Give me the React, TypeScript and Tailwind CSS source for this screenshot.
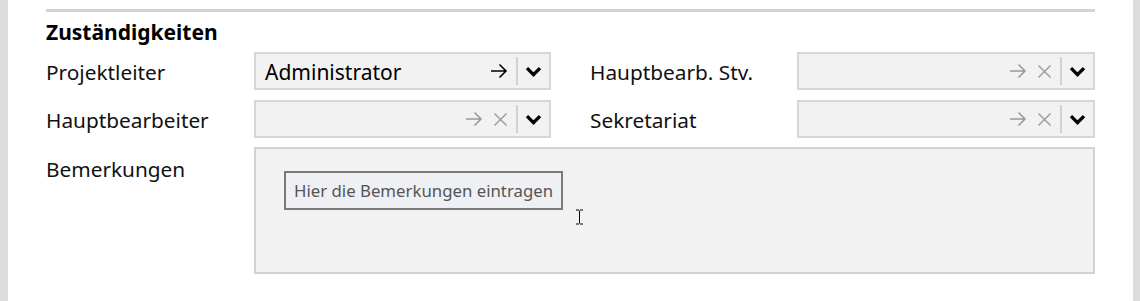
import React from "react";

const font = { fontFamily: '"Noto Sans", "Open Sans", sans-serif' };

function Arrow({ muted }: { muted?: boolean }) {
  return (
    <svg width="18" height="16" viewBox="0 0 18 16" className={muted ? "text-[#9a9a9a]" : "text-black"}>
      <path d="M1 8h15M9.5 1.5 16 8l-6.5 6.5" fill="none" stroke="currentColor" strokeWidth="1.6" />
    </svg>
  );
}

function Cross() {
  return (
    <svg width="15" height="15" viewBox="0 0 15 15" className="text-[#9a9a9a]">
      <path d="M1.5 1.5l12 12M13.5 1.5l-12 12" fill="none" stroke="currentColor" strokeWidth="1.4" />
    </svg>
  );
}

function Chevron() {
  return (
    <svg width="17" height="11" viewBox="0 0 17 11">
      <path d="M2 2.2l6.5 6.5 6.5-6.5" fill="none" stroke="black" strokeWidth="3.3" strokeLinejoin="miter" />
    </svg>
  );
}

function Combo({ value }: { value?: string }) {
  return (
    <div className="flex h-[38px] items-stretch border-2 border-[#d6d6d6] bg-[#f2f2f2]">
      <div className="flex flex-1 items-center pl-[9px] pr-[8px] text-[21px] text-black">
        <span className="flex-1 pt-[2px] leading-none">{value}</span>
        {value ? (
          <Arrow />
        ) : (
          <div className="flex items-center gap-[10px]">
            <Arrow muted />
            <Cross />
          </div>
        )}
      </div>
      <div className="my-[3px] w-[2px] bg-[#d2d2d2]" />
      <div className="flex w-[31px] items-center justify-center">
        <Chevron />
      </div>
    </div>
  );
}

function Label({ children }: { children: React.ReactNode }) {
  return <div className="flex h-[38px] items-center pt-[3px] text-[20.8px] text-[#111]">{children}</div>;
}

export default function App() {
  return (
    <div className="flex h-[301px] w-[1140px] bg-white" style={font}>
      <div className="w-[8px] bg-[#dcdcdc]" />
      <div className="flex flex-1 flex-col px-[38px]">
        <div className="mt-[9px] h-[3px] bg-[#d4d4d4]" />
        <div className="flex h-[40px] items-center pt-[2px] text-[21px] font-bold text-black">Zuständigkeiten</div>
        <div className="grid grid-cols-[208px_297px_39px_207px_298px] gap-y-[10px]">
          <Label>Projektleiter</Label>
          <Combo value="Administrator" />
          <div />
          <Label>Hauptbearb. Stv.</Label>
          <Combo />
          <Label>Hauptbearbeiter</Label>
          <Combo />
          <div />
          <Label>Sekretariat</Label>
          <Combo />
        </div>
        <div className="mt-[9px] flex">
          <div className="w-[208px] pt-[2px]">
            <Label>Bemerkungen</Label>
          </div>
          <div className="relative h-[127px] flex-1 border-2 border-[#d2d2d2] bg-[#f2f2f2] pl-[28px] pt-[22px]">
            <div className="inline-flex h-[39px] items-center border-2 border-[#7a7a7a] bg-[#eff0f4] px-[8px] text-[16.8px] text-[#555]">
              Hier die Bemerkungen eintragen
            </div>
            <svg className="absolute left-[319px] top-[60px]" width="9" height="16" viewBox="0 0 9 16">
              <path d="M1 1h3M5 1h3M4.5 1.5v13M1 15h3M5 15h3" fill="none" stroke="black" strokeWidth="1" />
            </svg>
          </div>
        </div>
      </div>
      <div className="w-[7px] bg-[#dcdcdc]" />
    </div>
  );
}
